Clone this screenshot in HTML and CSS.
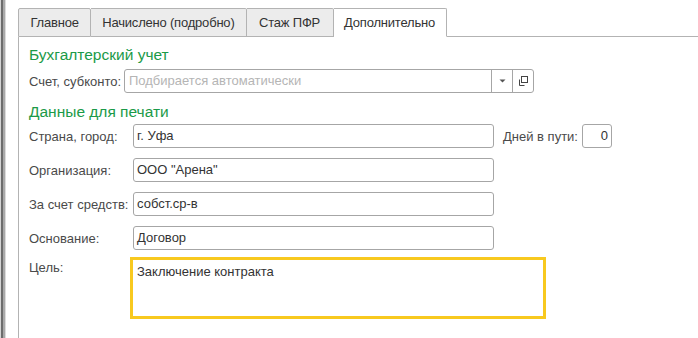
FILE: index.html
```html
<!DOCTYPE html>
<html lang="ru">
<head>
<meta charset="utf-8">
<title>Дополнительно</title>
<link rel="stylesheet" href="styles.css">
</head>
<body>
<div class="window">
  <div class="edge"></div>
  <div class="main">
    <div class="tabs">
      <div class="tab first">Главное</div>
      <div class="tab">Начислено (подробно)</div>
      <div class="tab short">Стаж ПФР</div>
      <div class="tab active">Дополнительно</div>
      <div class="tabs-rest"></div>
    </div>
    <div class="panel">
      <div class="group-title">Бухгалтерский учет</div>
      <div class="account-row">
        <span class="label account-label">Счет, субконто:</span>
        <div class="combo">
          <span class="placeholder">Подбирается автоматически</span>
          <span class="btn">
            <svg width="7" height="4" viewBox="0 0 7 4"><path d="M0.5 0.5H6.5L3.5 3.5Z" fill="#555"/></svg>
          </span>
          <span class="btn">
            <svg width="11" height="11" viewBox="0 0 11 11"><rect x="3.5" y="0.5" width="6" height="6" fill="none" stroke="#444"/><path d="M1.5 3.5V9.5H6.5" fill="none" stroke="#444"/></svg>
          </span>
        </div>
      </div>
      <div class="group-title second">Данные для печати</div>
      <div class="form">
        <div class="row">
          <span class="label">Страна, город:</span>
          <div class="field">г. Уфа</div>
          <span class="label days-label">Дней в пути:</span>
          <div class="field num">0</div>
        </div>
        <div class="row">
          <span class="label">Организация:</span>
          <div class="field">ООО "Арена"</div>
        </div>
        <div class="row">
          <span class="label">За счет средств:</span>
          <div class="field">собст.ср-в</div>
        </div>
        <div class="row">
          <span class="label">Основание:</span>
          <div class="field">Договор</div>
        </div>
        <div class="row memo-row">
          <span class="label">Цель:</span>
          <div class="memo">Заключение контракта</div>
        </div>
      </div>
    </div>
  </div>
</div>
</body>
</html>
```

FILE: styles.css
```css
* { box-sizing: border-box; }
html, body {
  margin: 0;
  padding: 0;
  background: #fff;
}
body {
  width: 698px;
  height: 338px;
  overflow: hidden;
  font-family: "Liberation Sans", Arial, sans-serif;
  font-size: 13px;
  color: #333;
}
.window {
  display: flex;
  height: 338px;
}
.edge {
  width: 6px;
  flex: none;
  background: linear-gradient(to right, #d4d4d4 0 1px, #6c6c6c 1px 3px, #a9a9a9 3px 5px, #dcdcdc 5px 6px);
}
.main {
  flex: 1;
  display: flex;
  flex-direction: column;
  padding: 8px 0 0 12px;
}
.tabs {
  display: flex;
  height: 29px;
  flex: none;
}
.tab {
  height: 29px;
  padding: 0 11px;
  line-height: 27px;
  letter-spacing: -0.2px;
  background: #ececec;
  border: 1px solid #b3b3b3;
  border-left: none;
  border-radius: 0 2px 0 0;
  color: #333;
  white-space: nowrap;
}
.tab.first {
  padding: 0 11.5px;
  border-left: 1px solid #b3b3b3;
  border-radius: 2px 2px 0 0;
}
.tab.short {
  padding: 0 12.5px;
}
.tab.active {
  padding: 0 10.5px;
  background: #fff;
  border-bottom-color: #fff;
}
.tabs-rest {
  flex: 1;
  border-bottom: 1px solid #b3b3b3;
}
.panel {
  flex: 1;
  border-left: 1px solid #b3b3b3;
  padding: 8px 0 0 10px;
}
.group-title {
  font-size: 15.5px;
  line-height: 20px;
  color: #1b9a48;
}
.group-title.second {
  margin-top: 9px;
}
.label {
  color: #4a4a4a;
  white-space: nowrap;
}
.account-row {
  display: flex;
  align-items: center;
  height: 24px;
  margin-top: 4px;
}
.account-label {
  width: 95px;
}
.combo {
  display: flex;
  width: 410px;
  height: 24px;
  border: 1px solid #a6a6a6;
  border-radius: 3px;
}
.placeholder {
  flex: 1;
  padding-left: 4px;
  line-height: 22px;
  color: #b5b5b5;
}
.btn {
  width: 21px;
  border-left: 1px solid #a6a6a6;
  display: flex;
  align-items: center;
  justify-content: center;
}
.btn svg { display: block; }
.form {
  display: flex;
  flex-direction: column;
  gap: 10px;
  margin-top: 2px;
}
.row {
  display: flex;
  align-items: center;
  height: 24px;
}
.row > .label:first-child {
  width: 104px;
}
.field {
  width: 361px;
  height: 24px;
  border: 1px solid #a6a6a6;
  border-radius: 3px;
  padding: 0 3px;
  line-height: 22px;
  color: #333;
}
.days-label {
  margin-left: 9px;
  margin-right: 4px;
}
.field.num {
  width: 30px;
  text-align: right;
}
.memo-row {
  align-items: flex-start;
  height: 56px;
}
.memo-row .label {
  line-height: 16px;
}
.memo {
  width: 410px;
  height: 56px;
  outline: 3px solid #f8c91f;
  padding: 4px 4px;
  line-height: 16px;
  color: #333;
}
```
